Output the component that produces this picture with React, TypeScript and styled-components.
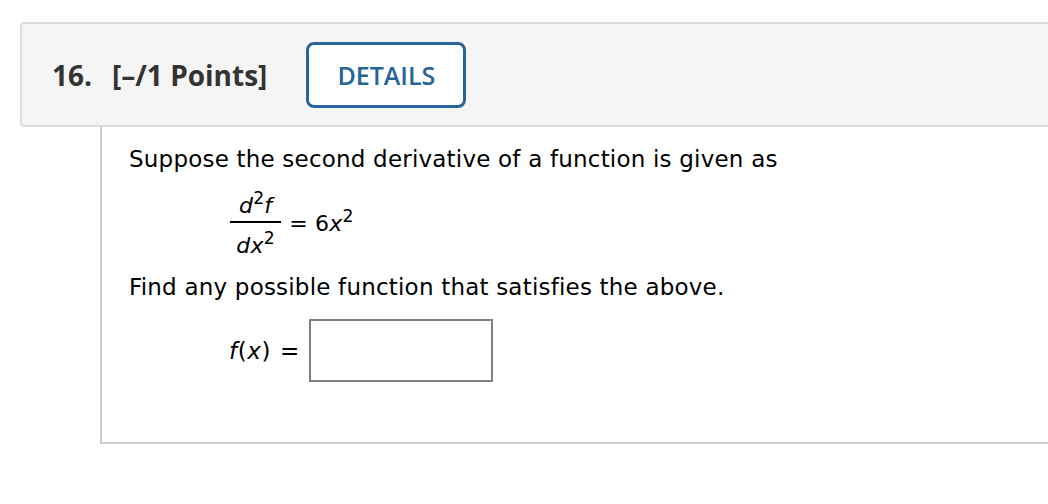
import styled, { createGlobalStyle } from 'styled-components';

const GlobalStyle = createGlobalStyle`
  body {
    margin: 0;
    background: #fff;
  }
`;

const Page = styled.div`
  padding: 22px 0 0 20px;
  width: 1028px;
  overflow: hidden;
`;

const Header = styled.div`
  display: flex;
  align-items: center;
  gap: 39px;
  height: 101px;
  padding-left: 30px;
  background: #f5f5f5;
  border: 2px solid #ddd;
  border-right: none;
  border-radius: 4px 0 0 4px;
`;

const Title = styled.h2`
  margin: 0;
  font-family: 'Open Sans', 'Liberation Sans', sans-serif;
  font-weight: 700;
  font-size: 28px;
  color: #333;
`;

const Number = styled.span`
  margin-right: 20px;
`;

const DetailsButton = styled.button`
  width: 160px;
  height: 66px;
  margin-top: 1px;
  background: #fff;
  border: 3px solid #27649a;
  border-radius: 8px;
  font-family: 'Open Sans', 'Liberation Sans', sans-serif;
  font-weight: 600;
  font-size: 25px;
  color: #27649a;
  padding: 0;
`;

const Question = styled.div`
  margin-left: 80px;
  height: 296px;
  padding: 19px 0 0 27px;
  border-left: 2px solid #ccc;
  border-bottom: 2px solid #ccc;
  font-family: Verdana, 'DejaVu Sans', sans-serif;
  font-size: 23px;
  letter-spacing: 0.2px;
  color: #000;
`;

const Para = styled.p`
  margin: 0;
  line-height: 26px;
`;

const Equation = styled.div`
  display: flex;
  align-items: center;
  gap: 8px;
  margin: 22px 0 15px 101px;
  font-size: 22px;
`;

const Fraction = styled.div`
  display: inline-flex;
  flex-direction: column;
  align-items: center;
`;

const Numer = styled.span`
  padding: 0 9px 3px;
  border-bottom: 2px solid #000;
  line-height: 24px;
`;

const Denom = styled.span`
  padding-top: 10px;
  line-height: 26px;
`;

const Var = styled.i`
  font-style: italic;
`;

const Sup = styled.sup`
  font-size: 0.78em;
  line-height: 0;
  vertical-align: 0.5em;
`;

const Rhs = styled.span`
  margin-top: -6px;
`;

const AnswerRow = styled.div`
  display: flex;
  align-items: center;
  gap: 9px;
  margin: 19px 0 0 100px;
`;

const AnswerLabel = styled.span`
  font-size: 23px;
  letter-spacing: 0.6px;
`;

const Equals = styled.span`
  margin-left: 9px;
`;

const AnswerInput = styled.input`
  box-sizing: border-box;
  width: 184px;
  height: 63px;
  border: 2px solid #808080;
  background: #fff;
  outline: none;
`;

export default function App() {
  return (
    <>
      <GlobalStyle />
      <Page>
        <Header>
          <Title>
            <Number>16.</Number>[–/1 Points]
          </Title>
          <DetailsButton>DETAILS</DetailsButton>
        </Header>
        <Question>
          <Para>Suppose the second derivative of a function is given as</Para>
          <Equation>
            <Fraction>
              <Numer>
                <Var>d</Var>
                <Sup>2</Sup>
                <Var>f</Var>
              </Numer>
              <Denom>
                <Var>dx</Var>
                <Sup>2</Sup>
              </Denom>
            </Fraction>
            <Rhs>
              = 6<Var>x</Var>
              <Sup>2</Sup>
            </Rhs>
          </Equation>
          <Para>Find any possible function that satisfies the above.</Para>
          <AnswerRow>
            <AnswerLabel>
              <Var>f</Var>(<Var>x</Var>)<Equals>=</Equals>
            </AnswerLabel>
            <AnswerInput type="text" />
          </AnswerRow>
        </Question>
      </Page>
    </>
  );
}
